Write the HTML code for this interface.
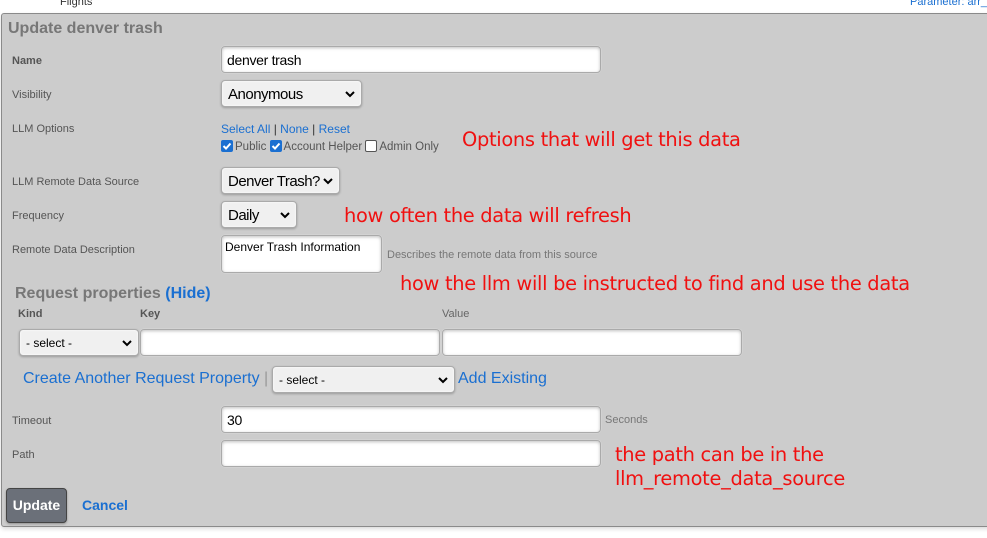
<!DOCTYPE html>
<html><head><meta charset="utf-8"><style>
*{box-sizing:border-box}
body{margin:0;width:987px;height:538px;background:#fff;font-family:"Liberation Sans",sans-serif;position:relative;overflow:hidden}
.a{position:absolute;white-space:nowrap}
.panel{position:absolute;left:1px;top:13px;width:990px;height:514px;background:#cccccc;border:1px solid #8a8a8a;border-radius:3px;box-shadow:0 2px 4px rgba(0,0,0,.15)}
.lbl{font-size:11px;color:#555}
.inp{position:absolute;background:#fff;border:1px solid #aaa;border-radius:4px;box-shadow:inset 0 1px 3px rgba(0,0,0,.25),0 0 1px #eee;font-size:14px;color:#000;padding:5px 5px 3px;line-height:16px;letter-spacing:-0.3px}
.sel{position:absolute;background:#f0f0f0;border:1px solid #aaa;border-radius:4px;box-shadow:0 1px 2px rgba(0,0,0,.25),inset 0 0 2px #fff;color:#000;padding:0 6px;display:flex;align-items:center;letter-spacing:-0.5px}
.sel svg{position:absolute;right:6px;top:50%;margin-top:-3px}
.lnk{color:#1a6fd1}
.red{color:#f01010;font-family:"DejaVu Sans",sans-serif;font-size:19.4px;letter-spacing:-0.3px}
.cb{display:inline-block;width:12px;height:12px;border-radius:2px;vertical-align:-2px;margin-right:2px}
.on{background:#1a6fd1;position:relative}
.off{background:#fff;border:1px solid #555}
</style></head><body>
<div class="a" style="left:60px;top:-4px;font-size:11px;color:#333">Flights</div>
<div class="a" style="left:910px;top:-4px;font-size:11px;color:#1a6fd1">Parameter: arr_</div>
<div class="panel"></div>
<div class="a" style="left:8px;top:20px;font-size:16px;font-weight:bold;color:#777">Update denver trash</div>

<div class="a lbl" style="left:12px;top:55px;font-weight:bold">Name</div>
<div class="inp" style="left:221px;top:46px;width:380px;height:27px">denver trash</div>

<div class="a lbl" style="left:12px;top:89px">Visibility</div>
<div class="sel" style="left:221px;top:80px;width:141px;height:27px;font-size:15px;padding-top:2px">Anonymous<svg width="10" height="7"><path d="M1 1l4 4 4-4" stroke="#000" stroke-width="2" fill="none"/></svg></div>

<div class="a lbl" style="left:12px;top:123px">LLM Options</div>
<div class="a" style="left:221px;top:122px;font-size:12px;color:#333"><span class="lnk">Select All</span> | <span class="lnk">None</span> | <span class="lnk">Reset</span></div>
<div class="a" style="left:221px;top:140px;font-size:11.5px;color:#555"><span class="cb on"><svg width="12" height="12" style="position:absolute;left:0;top:0"><path d="M2.5 6l2.5 2.5 4.5-5" stroke="#fff" stroke-width="2" fill="none"/></svg></span>Public <span class="cb on"><svg width="12" height="12" style="position:absolute;left:0;top:0"><path d="M2.5 6l2.5 2.5 4.5-5" stroke="#fff" stroke-width="2" fill="none"/></svg></span>Account Helper <span class="cb off"></span>Admin Only</div>
<div class="a red" style="left:462px;top:128px">Options that will get this data</div>

<div class="a lbl" style="left:12px;top:176px">LLM Remote Data Source</div>
<div class="sel" style="left:221px;top:167px;width:119px;height:27px;font-size:15px;padding-top:2px">Denver Trash?<svg width="10" height="7"><path d="M1 1l4 4 4-4" stroke="#000" stroke-width="2" fill="none"/></svg></div>

<div class="a lbl" style="left:12px;top:210px">Frequency</div>
<div class="sel" style="left:221px;top:201px;width:76px;height:27px;font-size:15px;padding-top:2px">Daily<svg width="10" height="7"><path d="M1 1l4 4 4-4" stroke="#000" stroke-width="2" fill="none"/></svg></div>
<div class="a red" style="left:344px;top:204px">how often the data will refresh</div>

<div class="a lbl" style="left:12px;top:244px">Remote Data Description</div>
<div class="inp" style="left:221px;top:235px;width:161px;height:38px;font-size:12px;padding:3px 3px;letter-spacing:0">Denver Trash Information</div>
<div class="a" style="left:387px;top:249px;font-size:11px;color:#777">Describes the remote data from this source</div>
<div class="a red" style="left:400px;top:272px">how the llm will be instructed to find and use the data</div>

<div class="a" style="left:15px;top:285px;font-size:16px;font-weight:bold;color:#777">Request properties <span class="lnk">(Hide)</span></div>
<div class="a" style="left:18px;top:308px;font-size:11px;font-weight:bold;color:#555">Kind</div>
<div class="a" style="left:140px;top:308px;font-size:11px;font-weight:bold;color:#555">Key</div>
<div class="a" style="left:442px;top:308px;font-size:11px;color:#666">Value</div>
<div class="sel" style="left:19px;top:329px;width:120px;height:27px;font-size:12px;letter-spacing:0">- select -<svg width="10" height="7"><path d="M1 1l4 4 4-4" stroke="#000" stroke-width="2" fill="none"/></svg></div>
<div class="inp" style="left:140px;top:329px;width:300px;height:27px"></div>
<div class="inp" style="left:442px;top:329px;width:300px;height:27px"></div>

<div class="a" style="left:23px;top:370px;font-size:16px;color:#999"><span class="lnk">Create Another Request Property</span> |</div>
<div class="sel" style="left:272px;top:366px;width:183px;height:27px;font-size:12px;letter-spacing:0">- select -<svg width="10" height="7"><path d="M1 1l4 4 4-4" stroke="#000" stroke-width="2" fill="none"/></svg></div>
<div class="a lnk" style="left:458px;top:370px;font-size:16px">Add Existing</div>

<div class="a lbl" style="left:12px;top:415px">Timeout</div>
<div class="inp" style="left:221px;top:406px;width:380px;height:27px">30</div>
<div class="a" style="left:605px;top:414px;font-size:11px;color:#777">Seconds</div>

<div class="a lbl" style="left:12px;top:449px">Path</div>
<div class="inp" style="left:221px;top:440px;width:380px;height:27px"></div>
<div class="a red" style="left:615px;top:443px;line-height:24px">the path can be in the<br>llm_remote_data_source</div>

<div class="a" style="left:6px;top:488px;width:61px;height:35px;background:#6b7079;border:1px solid #444;border-radius:4px;box-shadow:0 1px 2px rgba(0,0,0,.3);color:#fff;font-weight:bold;font-size:14px;text-align:center;line-height:33px">Update</div>
<div class="a lnk" style="left:82px;top:497px;font-size:14px;font-weight:bold">Cancel</div>
</body></html>
